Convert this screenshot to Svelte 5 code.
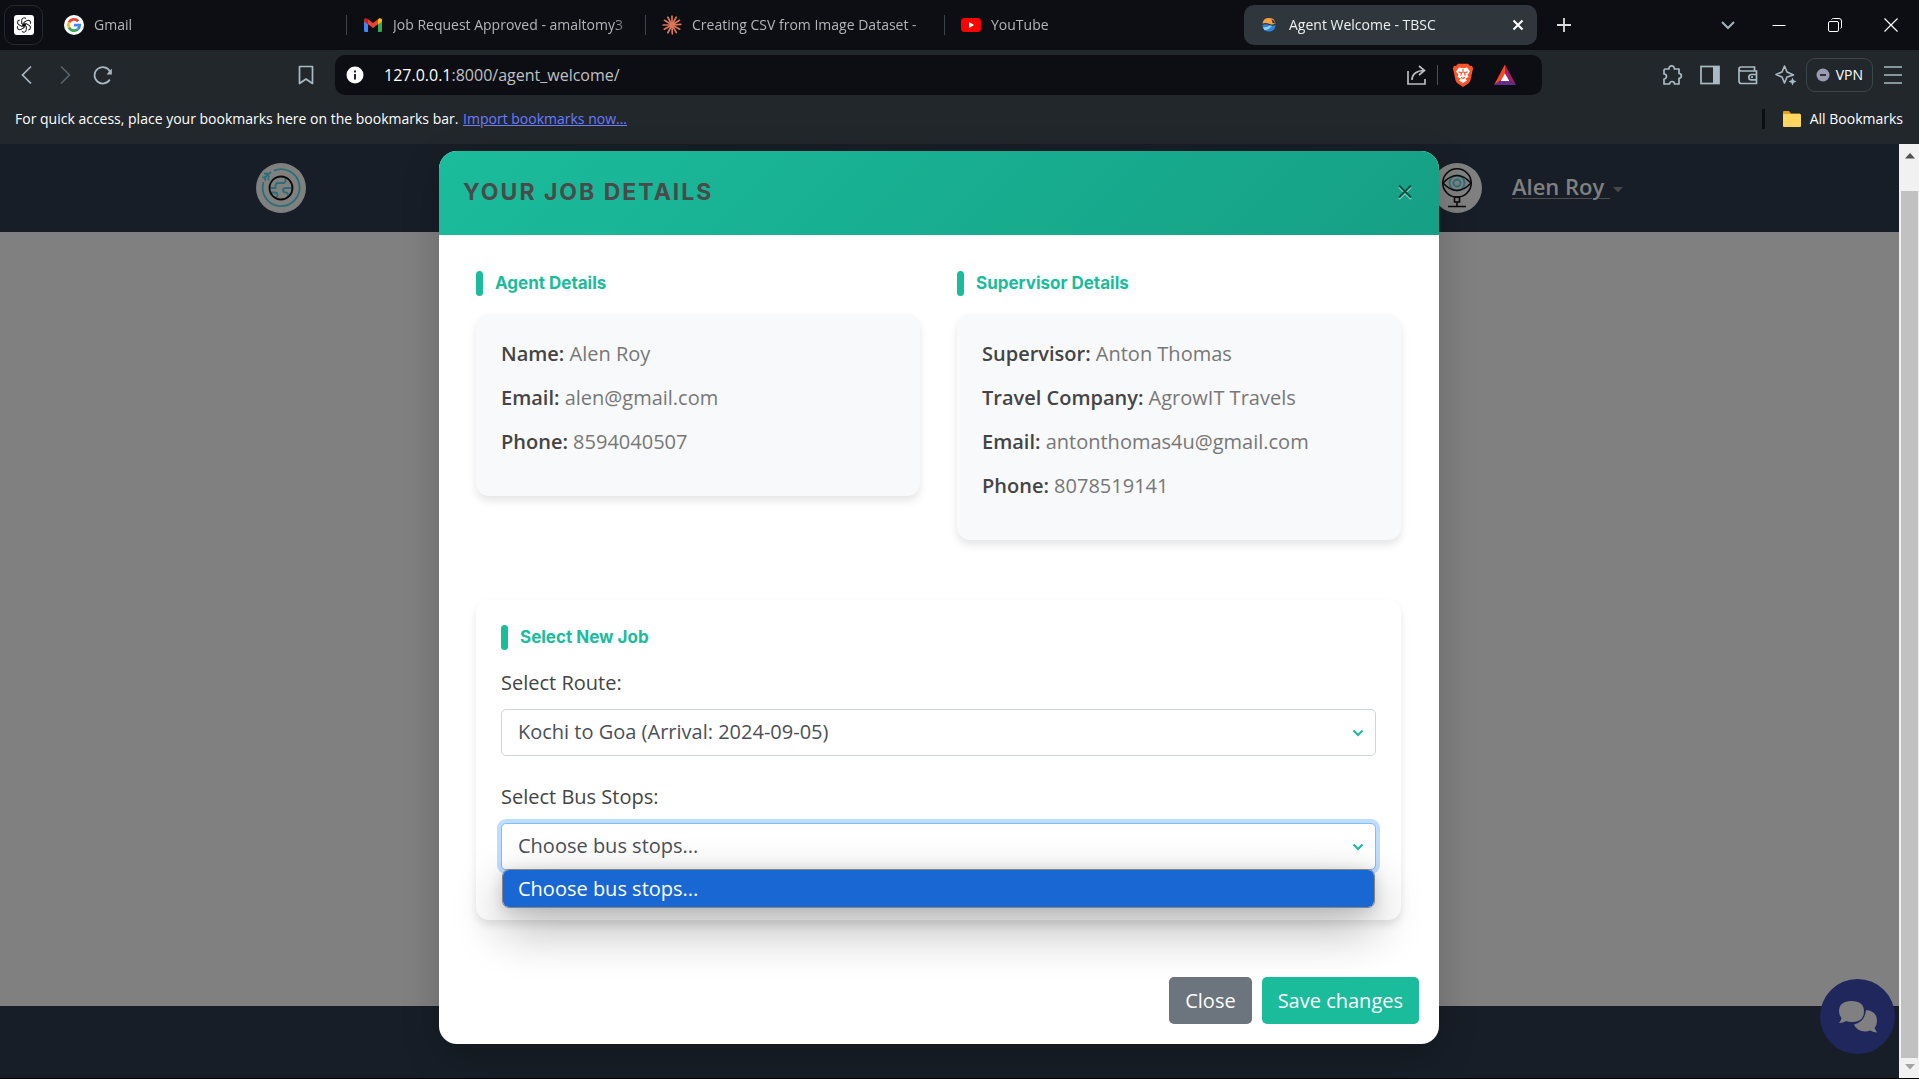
<script>
  const agent = [
    ['Name:', 'Alen Roy'],
    ['Email:', 'alen@gmail.com'],
    ['Phone:', '8594040507']
  ];
  const supervisor = [
    ['Supervisor:', 'Anton Thomas'],
    ['Travel Company:', 'AgrowIT Travels'],
    ['Email:', 'antonthomas4u@gmail.com'],
    ['Phone:', '8078519141']
  ];
  const rays = [0, 28, 58, 86, 118, 150, 178, 208, 242, 270, 302, 332];
  const petals = [0, 60, 120, 180, 240, 300];
</script>

{#snippet details(title, rows)}
  <section class="column">
    <h2 class="section-title">{title}</h2>
    <div class="card info">
      {#each rows as [label, value]}
        <p><strong>{label}</strong> {value}</p>
      {/each}
    </div>
  </section>
{/snippet}

{#snippet chevron()}
  <svg class="select-arrow" width="12" height="8" viewBox="0 0 12 8"><path d="M1.5 1.5 6 6l4.5-4.5" fill="none" stroke="#1abc9c" stroke-width="2" /></svg>
{/snippet}

<div class="window">
  <header class="tabs">
    <button class="pinned" aria-label="ChatGPT">
      <svg width="20" height="20" viewBox="0 0 20 20">
        <rect width="20" height="20" rx="3" fill="#fff" />
        <g fill="none" stroke="#111" stroke-width="1">
          {#each petals as a}
            <path transform={`rotate(${a} 10 10)`} d="M7.700 8.700V5.300a2.500 2.500 0 0 1 4.500-1.500M7.700 8.700l4.500 2.600" />
          {/each}
        </g>
      </svg>
    </button>
    <button class="tab">
      <svg width="20" height="20" viewBox="0 0 20 20">
        <circle cx="10" cy="10" r="10" fill="#fff" />
        <g fill="none" stroke-width="2.800">
          <path d="M14.200 6.200A5.700 5.700 0 0 0 5 7.300" stroke="#ea4335" />
          <path d="M5 7.300a5.700 5.700 0 0 0 0 5.400" stroke="#fbbc05" />
          <path d="M5 12.700a5.700 5.700 0 0 0 8.800 1.500" stroke="#34a853" />
          <path d="M13.800 14.200a5.500 5.500 0 0 0 1.900-4.100H10" stroke="#4285f4" />
        </g>
      </svg>
      <span>Gmail</span>
    </button>
    <button class="tab sep">
      <svg width="20" height="20" viewBox="0 0 20 20">
        <path d="M1 4.500 5 7.400V17H2.300A1.300 1.300 0 0 1 1 15.700z" fill="#4285f4" />
        <path d="M19 4.500 15 7.400V17h2.700a1.300 1.300 0 0 0 1.300-1.300z" fill="#34a853" />
        <path d="M5 4.300 10 8l5-3.700v5L10 13 5 9.300z" fill="#ea4335" />
        <path d="M15 4.300l1-.8c1.300-.9 3 0 3 1.500v1.600l-4 3z" fill="#fbbc04" />
        <path d="M5 4.300l-1-.8C2.700 2.600 1 3.500 1 5v1.600l4 3z" fill="#c5221f" />
      </svg>
      <span>Job Request Approved - amaltomy3</span>
    </button>
    <button class="tab sep">
      <svg width="20" height="20" viewBox="0 0 20 20">
        <g stroke="#d97757" stroke-width="1.700" stroke-linecap="round">
          {#each rays as a}
            <path transform={`rotate(${a} 10 10)`} d="M10 10V1.200" />
          {/each}
        </g>
        <circle cx="10" cy="10" r="2.500" fill="#d97757" />
      </svg>
      <span>Creating CSV from Image Dataset - </span>
    </button>
    <button class="tab sep">
      <svg width="20" height="20" viewBox="0 0 20 20">
        <rect y="3" width="20" height="14" rx="3.500" fill="#f00" />
        <path d="m8 7 5.200 3L8 13z" fill="#fff" />
      </svg>
      <span>YouTube</span>
    </button>
    <div class="tab active">
      <svg width="20" height="20" viewBox="0 0 20 20">
        <path d="M3.500 8.500a6.600 6.600 0 0 1 13 0q-3.200 1.700-6.500.3T3.500 8.500z" fill="#f9a03f" />
        <path d="M12.500 4.200q3 1 4 4.300l-3-.5z" fill="#263b59" />
        <path d="M3.400 10q3.300-1.500 6.600 0t6.600 0a6.600 6.600 0 0 1-13.200 0z" fill="#2f86d6" />
        <path d="M4 12.500q4 0 7-2l2 .3q-3 4-7.500 4.500z" fill="#8fd0f5" />
      </svg>
      <span>Agent Welcome - TBSC</span>
      <button class="plain" aria-label="Close tab">
        <svg width="14" height="14" viewBox="0 0 14 14"><path d="m2.500 2.500 9 9m0-9-9 9" stroke="#fff" stroke-width="2" /></svg>
      </button>
    </div>
    <button class="plain new" aria-label="New tab">
      <svg width="16" height="16" viewBox="0 0 16 16"><path d="M8 1v14M1 8h14" stroke="#ddd" stroke-width="1.800" /></svg>
    </button>
    <div class="controls">
      <button class="plain" aria-label="Search tabs"><svg width="16" height="16" viewBox="0 0 16 16"><path d="m2 5 6 6 6-6" fill="none" stroke="#a3b2bd" stroke-width="2" /></svg></button>
      <button class="plain" aria-label="Minimize"><svg width="16" height="16" viewBox="0 0 16 16"><path d="M1.500 8.500h13" stroke="#fff" /></svg></button>
      <button class="plain" aria-label="Restore"><svg width="16" height="16" viewBox="0 0 16 16"><g fill="none" stroke="#fff"><rect x="1.500" y="4.500" width="10" height="10" rx="1.500" /><path d="M4.500 2.500q.5-1 2-1H12q2.500 0 2.500 2.500v6q0 1-1 1.500" /></g></svg></button>
      <button class="plain" aria-label="Close window"><svg width="16" height="16" viewBox="0 0 16 16"><path d="m1.500 1.500 13 13m0-13-13 13" stroke="#fff" stroke-width="1.200" /></svg></button>
    </div>
  </header>

  <div class="toolbar">
    <div class="nav-buttons">
      <button class="plain" aria-label="Back"><svg width="20" height="20" viewBox="0 0 20 20"><path d="m14 1.500-8.500 8.500L14 18.500" fill="none" stroke="#a9bac4" stroke-width="1.700" /></svg></button>
      <button class="plain" aria-label="Forward"><svg width="20" height="20" viewBox="0 0 20 20"><path d="m6 1.500 8.500 8.500L6 18.500" fill="none" stroke="#56616a" stroke-width="1.700" /></svg></button>
      <button class="plain" aria-label="Reload"><svg width="20" height="20" viewBox="0 0 20 20"><path d="M16.800 14.500A8.200 8.200 0 1 1 17 6.500" fill="none" stroke="#a9bac4" stroke-width="1.700" /><path d="M18.800 3.500v6h-5.300z" fill="#a9bac4" /></svg></button>
    </div>
    <button class="plain" aria-label="Bookmark this page"><svg width="20" height="20" viewBox="0 0 20 20"><path d="M3.500 1.500h13v17L10 14l-6.500 4.500z" fill="none" stroke="#a9bac4" stroke-width="1.700" stroke-linejoin="round" /></svg></button>
    <div class="address">
      <svg width="18" height="18" viewBox="0 0 18 18"><circle cx="9" cy="9" r="8.500" fill="#fff" /><path d="M9 8v5.500M9 4.500v2" stroke="#0e0f14" stroke-width="1.800" /></svg>
      <div class="url"><b>127.0.0.1</b>:8000/agent_welcome/</div>
      <button class="plain" aria-label="Share"><svg width="22" height="22" viewBox="0 0 22 22"><path d="M2 7v13h17v-5M6 16c0-6 5-9.500 12-9.500M13 2l5.500 4.500L13 11" fill="none" stroke="#b9bcc0" stroke-width="1.700" /></svg></button>
      <i></i>
      <button class="plain" aria-label="Brave Shields">
        <svg width="22" height="24" viewBox="0 0 22 24">
          <path d="M6 .8h10l2 2.200 2-.2 1.200 3-.7 2-2 9.500q-.5 2-2.300 3.300L11 24l-5.200-3.400Q4 19.300 3.500 17.300l-2-9.500-.7-2 1.200-3 2 .2z" fill="#fb542b" />
          <path d="m7 4.500 4 .7 4-.7 3 4-2.500 3.200 1 2.300-3.200 1.600L15 17.500 11 20l-4-2.500 1.700-1.900L5.500 14l1-2.300L4 8.500z" fill="#fff" />
          <path d="m6.500 8.800 3 .8-.7 3M15.500 8.800l-3 .8.7 3M9 14.500l2 .8 2-.8M11 6v4" fill="none" stroke="#fb542b" stroke-width="1.200" />
        </svg>
      </button>
      <button class="plain" aria-label="Brave Rewards">
        <svg width="24" height="22" viewBox="0 0 24 22"><path d="M12 .5 1 21l11-7.500z" fill="#ff4724" /><path d="M12 .5 23 21l-11-7.500z" fill="#9e1f63" /><path d="M1 21h22l-11-7.500z" fill="#662d91" /><path d="m12 9.500 4.300 7.500H7.700z" fill="#fff" /></svg>
      </button>
    </div>
    <div class="tools">
      <button class="plain" aria-label="Extensions"><svg width="22" height="22" viewBox="0 0 22 22"><path d="M4 5h4a2.700 2.700 0 1 1 5.300 0H18v4.500a2.400 2.400 0 1 1 0 4.800V20h-4.500a2.500 2.500 0 0 0-5 0H3v-5a2.500 2.500 0 0 0 0-5V6z" fill="none" stroke="#a9bac4" stroke-width="1.700" stroke-linejoin="round" /></svg></button>
      <button class="plain" aria-label="Sidebar"><svg width="22" height="22" viewBox="0 0 22 22"><rect x="2" y="2.500" width="18" height="17" fill="none" stroke="#a9bac4" stroke-width="1.700" /><path d="M14 2h6v18h-6z" fill="#a9bac4" /></svg></button>
      <button class="plain" aria-label="Wallet"><svg width="22" height="22" viewBox="0 0 22 22"><path d="M17.500 7V3H4Q2 3 2 5v12q0 2.500 2.500 2.500h15V7H4Q2 7 2 5M19.500 10.500h-5a2.700 2.700 0 0 0 0 5.400h5M14 13.200h2" fill="none" stroke="#a9bac4" stroke-width="1.700" /></svg></button>
      <button class="plain" aria-label="Leo AI"><svg width="22" height="22" viewBox="0 0 22 22"><path d="M9.500 2 12 8l6.500 3L12 13l-2.500 6L7 13l-6-2.500L7 8z" fill="none" stroke="#a9bac4" stroke-width="1.600" stroke-linejoin="round" /><path d="m17.500 13.500 1.200 2.800 2.800 1.200-2.800 1.200-1.200 2.800-1.200-2.800-2.800-1.200 2.800-1.200z" fill="#a9bac4" /></svg></button>
      <button class="vpn"><svg width="14" height="14" viewBox="0 0 14 14"><circle cx="7" cy="7" r="6.500" fill="#9a9bb2" /><path d="M4 7h6" stroke="#22272b" stroke-width="1.800" /></svg>VPN</button>
      <button class="plain" aria-label="Menu"><svg width="20" height="20" viewBox="0 0 20 20"><path d="M1 2h18M1 10h18M1 18h18" stroke="#a9bac4" stroke-width="1.700" /></svg></button>
    </div>
  </div>

  <div class="bookmarks">
    <p>For quick access, place your bookmarks here on the bookmarks bar. <a href="#import">Import bookmarks now...</a></p>
    <button class="all">
      <svg width="20" height="20" viewBox="0 0 20 20"><path d="M1 3q0-1 1-1h5l2 2.500h9V8H1z" fill="#dfa21d" /><rect x="1" y="5" width="18" height="13" rx="1" fill="#ffd75e" /></svg>
      All Bookmarks
    </button>
  </div>

  <div class="viewport">
    <div class="page">
      <nav class="site-nav">
        <svg width="50" height="50" viewBox="0 0 50 50">
          <circle cx="25" cy="25" r="25" fill="#808080" />
          <g fill="none" stroke="#2a6f75" stroke-width="1.800">
            <path d="M18 7.600A18.500 18.500 0 1 1 7.500 19" />
            <path d="M14 25h5.500v-2.500q0-2.500 2.500-2.500h5q2.500 0 2.500-2.500V14M36 25h-6q-3 0-3 2.200t3 2.300q2 0 2 3v1M14 29.500h4.500q3 0 3 2.500t-2 2.500" />
            <path d="M7.500 15.500 15 9M8 10.500l5 .5M12.500 17.500v-5M6.500 14l2.500 1 .5 3" />
          </g>
          <circle cx="25" cy="25" r="11.500" fill="none" stroke="#0a0a0a" stroke-width="1.800" />
        </svg>
        <div class="user">
          <svg width="50" height="50" viewBox="0 0 50 50">
            <circle cx="25" cy="25" r="25" fill="#808080" />
            <g fill="none" stroke="#2a6f75" stroke-width="1.800"><circle cx="25" cy="20" r="7.500" /><circle cx="25" cy="20" r="3.500" /></g>
            <g fill="none" stroke="#0a0a0a" stroke-width="1.600">
              <circle cx="25" cy="20" r="14.200" />
              <path d="M11 20q14-15 28 0-14 15-28 0zM22.500 34h5v5h-5zM25 39v4M16 43.500h18" />
            </g>
          </svg>
          <a href="#account">Alen Roy&nbsp;</a>
          <svg class="caret" width="10" height="6" viewBox="0 0 10 6"><path d="M0 0h10L5 5.500z" fill="#474847" /></svg>
        </div>
      </nav>
      <main></main>
      <footer class="site-footer"></footer>

      <button class="chat" aria-label="Open chat">
        <svg width="40" height="34" viewBox="0 0 40 34">
          <path d="M28 10q11 1 11 11 0 4-2.500 7l2.500 4.500q-4 0-6.500-2-7 2.500-12.500-1-3-2-4-5Q27 22 28 10z" fill="#808080" />
          <path d="M13.500 1q12.500 0 12.500 10.500T13.500 22q-3 0-5.500-1-3 2.200-7 2 2-2.500 2.500-5Q1 15 1 11.500 1 1 13.500 1z" fill="#808080" />
        </svg>
      </button>

      <div class="overlay">
        <div class="modal" role="dialog" aria-labelledby="modal-title">
          <div class="modal-header">
            <h1 id="modal-title">YOUR JOB DETAILS</h1>
            <button class="plain" aria-label="Close dialog">
              <svg width="14" height="16" viewBox="0 0 14 16"><path d="m1 3 12 12m0-12L1 15" stroke="#8cd0c2" stroke-width="2" /><path d="m1 1.500 12 12m0-12-12 12" stroke="#0d5346" stroke-width="2" /></svg>
            </button>
          </div>
          <div class="modal-body">
            <div class="columns">
              {@render details('Agent Details', agent)}
              {@render details('Supervisor Details', supervisor)}
            </div>
            <form class="card job">
              <h2 class="section-title">Select New Job</h2>
              <label for="route">Select Route:</label>
              <div class="field">
                <select id="route"><option>Kochi to Goa (Arrival: 2024-09-05)</option></select>
                {@render chevron()}
              </div>
              <label for="stops">Select Bus Stops:</label>
              <div class="field">
                <select id="stops" class="open"><option>Choose bus stops...</option></select>
                {@render chevron()}
                <ul class="options" role="listbox" aria-label="Bus stops">
                  <li role="option" aria-selected="true">Choose bus stops...</li>
                </ul>
              </div>
            </form>
          </div>
          <div class="modal-footer">
            <button class="btn gray">Close</button>
            <button class="btn green">Save changes</button>
          </div>
        </div>
      </div>
    </div>
    <div class="scrollbar" aria-hidden="true">
      <svg width="10" height="6" viewBox="0 0 10 6"><path d="M0 5.500h10L5 0z" fill="#505050" /></svg>
      <div class="thumb"></div>
      <svg width="10" height="6" viewBox="0 0 10 6"><path d="M0 0h10L5 5.500z" fill="#a3a3a3" /></svg>
    </div>
  </div>
</div>

<style>
  :global(body) { margin: 0; background: #000; }
  * { box-sizing: border-box; }
  svg { display: block; flex: none; }
  h1, h2, p, ul { margin: 0; padding: 0; }
  button, select { font: inherit; color: inherit; }
  button { border: 0; background: none; padding: 0; }
  .plain { display: flex; }

  .window {
    min-height: 100vh;
    display: flex;
    flex-direction: column;
    padding-bottom: 1px;
    font: 14px/20px "Open Sans", sans-serif;
    color: #fff;
  }

  .tabs { height: 50px; display: flex; align-items: center; background: #0d0e13; padding: 0 20px 0 4px; }
  .pinned { width: 39px; height: 40px; display: grid; place-items: center; border: 1px solid #23282c; border-radius: 10px; margin-right: 4px; }
  .tab { flex: 0 1 299px; min-width: 0; height: 40px; display: flex; align-items: center; gap: 10px; padding: 0 12px 0 17px; color: #b4b5b7; text-align: left; position: relative; }
  .tab span { flex: 1; overflow: hidden; white-space: nowrap; mask-image: linear-gradient(90deg, #000 92%, transparent); }
  .sep::before { content: ""; position: absolute; left: 0; top: 10px; width: 1px; height: 20px; background: #3c4448; }
  .active { flex-basis: 293px; background: #2f373d; border-radius: 10px; color: #eef0f1; margin-left: 1px; padding: 0 12px 0 15px; }
  .new { margin-left: 19px; }
  .controls { margin-left: auto; display: flex; gap: 40px; }
  .controls .plain:first-child { margin-right: -5px; }

  .toolbar { height: 50px; display: flex; align-items: center; background: #22272b; padding: 0 16px 0 17px; }
  .nav-buttons { display: flex; gap: 18px; margin-right: 183px; }
  .address { flex: 1; height: 40px; margin-left: 19px; display: flex; align-items: center; background: #0d0e13; border-radius: 10px; padding: 0 25px 0 11px; }
  .url { flex: 1; margin-left: 20px; font-size: 16px; color: #c0c1c3; }
  .url b { font-weight: 400; color: #fff; }
  .address i { width: 1px; height: 20px; background: #4c5053; margin: 0 14px 0 9px; }
  .address .plain:last-child { margin-left: 19px; }
  .tools { display: flex; align-items: center; gap: 16px; margin-left: 119px; }
  .vpn { display: flex; align-items: center; gap: 6px; height: 34px; padding: 0 9px; border: 1px solid #3b464a; border-radius: 9px; margin: 0 -6px 0 -7px; }

  .bookmarks { height: 44px; display: flex; align-items: center; justify-content: space-between; background: #22272b; padding: 0 16px 6px 15px; }
  .bookmarks a { color: #6b7cff; margin-left: 1px; }
  .all { height: 20px; display: flex; align-items: center; gap: 8px; padding-left: 17px; border-left: 3px solid #0d0e13; }

  .viewport { flex: 1; display: flex; }
  .page { flex: 1; min-width: 0; display: flex; flex-direction: column; position: relative; background: #808080; }
  .site-nav { height: 88px; display: flex; align-items: center; justify-content: space-between; background: #171e27; padding: 0 276px 0 256px; }
  .user { display: flex; align-items: center; }
  .user a { font-size: 22px; font-weight: 600; line-height: 30px; color: #808080; margin-left: 30px; padding-bottom: 4px; text-decoration: underline 1px #504c48; text-underline-offset: 3px; }
  .caret { margin: 4px 0 0 3px; }
  main { flex: 1; }
  .site-footer { height: 72px; background: #171e27; }

  .chat { position: absolute; right: 4px; bottom: 24px; width: 75px; height: 75px; border-radius: 50%; background: #1f275c; display: grid; place-items: center; }

  .overlay { position: absolute; inset: 0; display: flex; justify-content: center; align-items: flex-start; padding: 7px 21px 0 0; }
  .modal { width: 100%; max-width: 1000px; background: #fff; border-radius: 18px; box-shadow: 0 12px 38px rgba(0, 0, 0, 0.2); overflow: hidden; color: #444; font-size: 20px; line-height: 30px; }
  .modal-header { height: 84px; display: flex; align-items: center; justify-content: space-between; padding: 0 27px 2px 24px; background: linear-gradient(135deg, #1abc9c, #16a085); }
  h1 { font: 700 23px/30px Inter, sans-serif; letter-spacing: 2px; color: #4a4a4a; }
  .modal-body { padding: 36px 38px 0 37px; }
  .columns { display: flex; align-items: flex-start; gap: 37px; }
  .column { flex: 1; min-width: 0; }
  .section-title { display: flex; align-items: center; gap: 12px; font: 700 17px/25px Inter, sans-serif; color: #1abc9c; }
  .section-title::before { content: ""; width: 7px; height: 25px; border-radius: 4px; background: #1abc9c; }
  .card { border-radius: 13px; padding: 25px; box-shadow: 0 5px 8px rgba(0, 0, 0, 0.1); }
  .info { margin-top: 18px; background: #f8f9fa; color: #777; }
  .info p { padding-bottom: 14px; }
  strong { font-weight: 600; color: #444; }
  .job { margin-top: 60px; }
  .job label { display: block; margin: 18px 0 11px; }
  .field { position: relative; margin-bottom: 25px; }
  .field + label { margin-top: 26px; }
  select { display: block; width: 100%; height: 47px; padding: 0 40px 2px 16px; border: 1px solid #ced4da; border-radius: 5px; background: #fff; color: #495057; appearance: none; outline: 0; }
  .open { border-color: #80bdff; box-shadow: 0 0 0 4px #bfdeff; }
  .select-arrow { position: absolute; right: 12px; top: 20px; }
  .options { position: absolute; z-index: 2; left: 1px; right: 1px; top: 46px; list-style: none; background: #fff; border: 1px solid #858585; border-radius: 7px; overflow: hidden; box-shadow: 0 20px 50px rgba(0, 0, 0, 0.32), 0 2px 14px rgba(0, 0, 0, 0.15); }
  .options li { height: 37px; line-height: 37px; padding-left: 15px; background: #1967d2; color: #fff; }
  .modal-footer { display: flex; justify-content: flex-end; gap: 10px; padding: 57px 20px 20px; }
  .btn { height: 47px; padding: 0 16px; border-radius: 5px; color: #fff; }
  .gray { background: #6c757d; }
  .green { background: #1abc9c; }

  .scrollbar { width: 20px; display: flex; flex-direction: column; align-items: center; justify-content: space-between; background: #f1f1f1; padding: 9px 1px 8px 2px; }
  .thumb { flex: 1; width: 100%; margin: 32px 0 6px; background: #c1c1c1; }
</style>
